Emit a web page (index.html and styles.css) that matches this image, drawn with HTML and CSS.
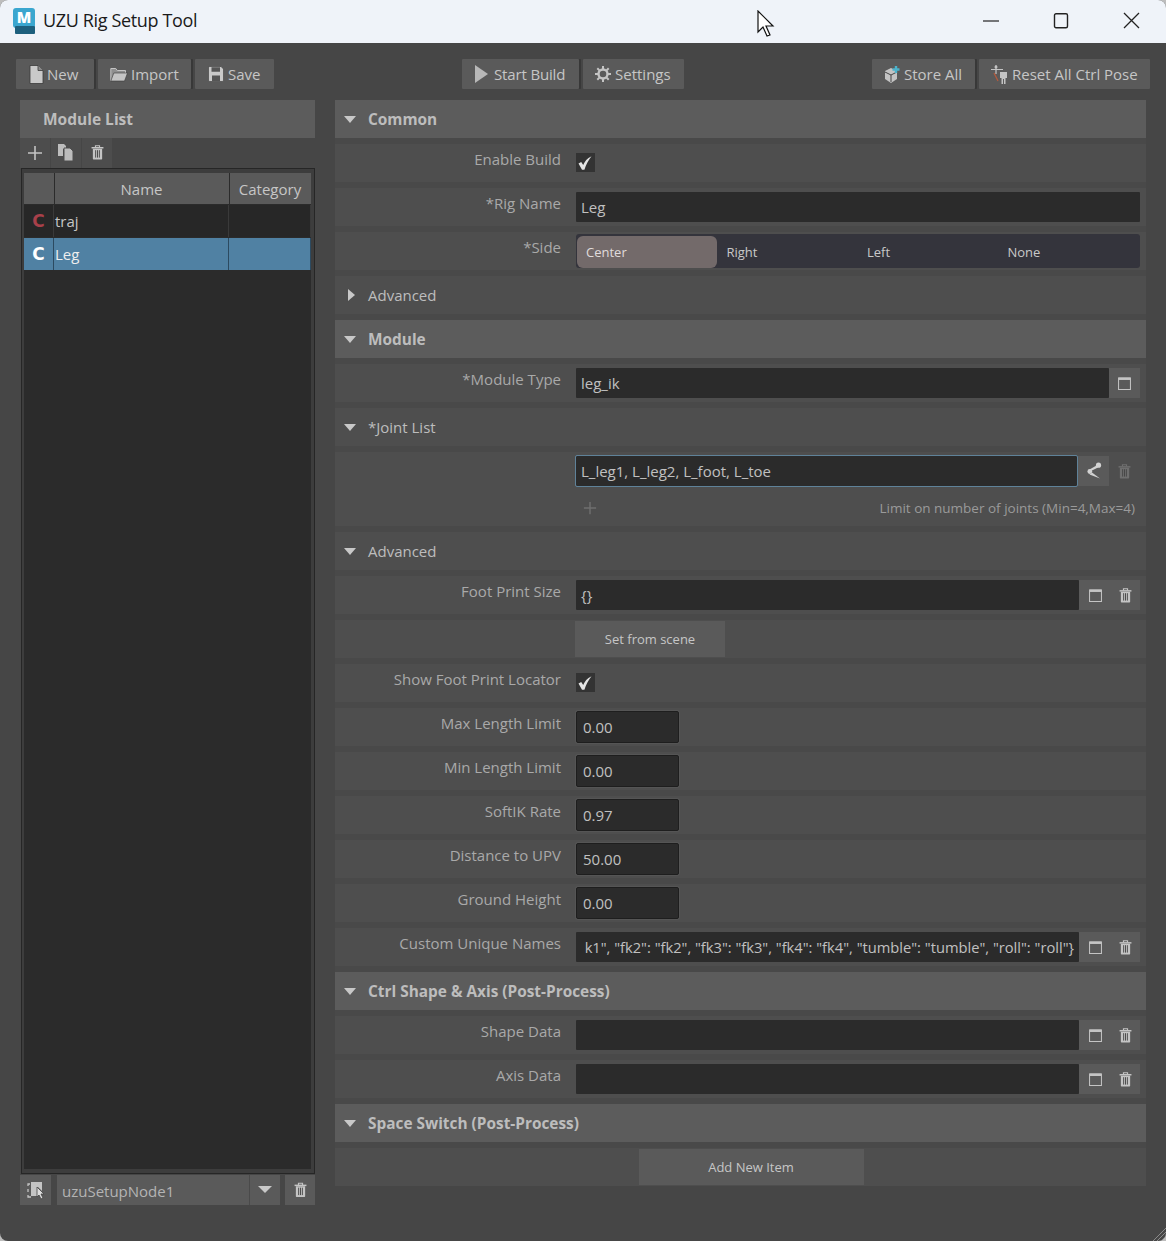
FILE: index.html
```html
<!DOCTYPE html>
<html lang="en">
<head>
<meta charset="utf-8">
<title>UZU Rig Setup Tool</title>
<link rel="stylesheet" href="styles.css">
</head>
<body>
<svg class="sprite" width="0" height="0">
  <symbol id="i-trash" viewBox="0 0 14 16"><path d="M4.800 2.500V.8h4.400v1.700" fill="none" stroke="currentColor" stroke-width="1.200"/><path d="M.6 2.200h12.800v1.600H.6z" fill="currentColor"/><path d="M2 4h10v10.800c0 .4-.3.7-.7.7H2.700c-.4 0-.7-.3-.7-.7z" fill="currentColor"/><path d="M5 5.500v8M7 5.500v8M9 5.500v8" stroke="#444" stroke-width="1"/></symbol>
  <symbol id="i-win" viewBox="0 0 14 14"><path d="M.6 1h12.800v12.400H.6z" fill="none" stroke="currentColor" stroke-width="1.100"/><path d="M.6 .6h12.800v2.600H.6z" fill="currentColor"/></symbol>
  <symbol id="i-plus" viewBox="0 0 16 16"><path d="M8 1v14M1 8h14" fill="none" stroke="currentColor" stroke-width="1.600"/></symbol>
  <symbol id="i-check" viewBox="0 0 16 16"><path d="M1.500 8.500 4.200 7l2 3C7.800 6.400 10 3.400 14.500 1.200 11.500 5 9 9.500 7.400 14.800H5z" fill="currentColor"/></symbol>
</svg>
<div class="window">
  <header class="titlebar">
    <svg class="logo" width="24" height="26" viewBox="0 0 24 26"><rect x="1" y="0" width="22" height="20" rx="3" fill="#3aa6cf"/><rect x="3" y="18" width="20" height="8" rx="1" fill="#1d5f7d"/><text x="12" y="15" class="logo-m">M</text></svg>
    <span class="title">UZU Rig Setup Tool</span>
    <div class="winctrls">
      <svg width="16" height="16" viewBox="0 0 16 16"><path d="M0 8h16" stroke="#222" stroke-width="1.200"/></svg>
      <svg width="16" height="16" viewBox="0 0 16 16"><rect x="1.500" y=".8" width="13" height="14" rx="1.500" fill="none" stroke="#222" stroke-width="1.400"/></svg>
      <svg width="17" height="17" viewBox="0 0 17 17"><path d="M1 1l15 15M16 1 1 16" stroke="#222" stroke-width="1.300"/></svg>
    </div>
  </header>

  <main class="content">
    <nav class="toolbar">
      <div class="btngroup">
        <button class="tbtn w-new"><svg width="15" height="19" viewBox="0 0 15 19"><path d="M1 .5h8l5 5v13H1z" fill="#c9c9c9" stroke="#3a3a3a" stroke-width=".8"/><path d="M9 .5v5h5" fill="#8a8a8a" stroke="#3a3a3a" stroke-width=".8"/></svg>New</button>
        <button class="tbtn w-import"><svg width="18" height="15" viewBox="0 0 18 15"><path d="M.8 14V1.500h5l1.500 2H15.500v2.500" fill="#8f8f8f" stroke="#c4c4c4" stroke-width="1"/><path d="M.8 14 3.800 6h13.700l-3 8z" fill="#c4c4c4" stroke="#3a3a3a" stroke-width=".6"/></svg>Import</button>
        <button class="tbtn w-save"><svg width="16" height="16" viewBox="0 0 16 16"><path d="M.5 2C.5 1 1 .5 2 .5h11l2.500 2.500v11c0 1-.5 1.500-1.500 1.500H2c-1 0-1.500-.5-1.500-1.500z" fill="#c9c9c9" stroke="#3a3a3a" stroke-width=".6"/><path d="M3.500 1.300h8.500v4.500H3.500zM4 9.500h8v5.500H4z" fill="#555"/></svg>Save</button>
      </div>
      <div class="btngroup">
        <button class="tbtn w-build"><svg width="13" height="18" viewBox="0 0 13 18"><path d="M0 0l13 9-13 9z" fill="#b8b8b8"/></svg>Start Build</button>
        <button class="tbtn w-settings"><svg width="16" height="17" viewBox="0 0 16 17"><circle cx="8" cy="8" r="4.500" fill="none" stroke="#c4c4c4" stroke-width="2.400"/><path d="M8 0v3M8 13v3M0 8h3M13 8h3M2.300 2.300l2.100 2.100M11.600 11.600l2.100 2.100M13.700 2.300l-2.100 2.100M4.400 11.600l-2.100 2.100" stroke="#c4c4c4" stroke-width="2"/></svg>Settings</button>
      </div>
      <div class="btngroup">
        <button class="tbtn w-store"><svg width="16" height="18" viewBox="0 0 16 18"><path d="M0 6l6-3 6 3v8l-6 4-6-4z" fill="#c4c4c4"/><path d="M0 7l6 3v7M6 10l6-3" fill="none" stroke="#444"/><path d="M11 1v7M7.500 4.500h7" stroke="#4cb3cc" stroke-width="2.400"/></svg>Store All</button>
        <button class="tbtn w-reset"><svg width="18" height="20" viewBox="0 0 18 20"><circle cx="6" cy="3" r="1.500" fill="#c4c4c4"/><path d="M1 5.500h12M6 1v9" stroke="#c4c4c4" stroke-width="1.200"/><path d="M10 8h7v6h-1.500v6h-1.500v-5h-1v5h-1.500v-6H10z" fill="#c4c4c4"/><path d="M4 9l4 8" stroke="#b65a3c" stroke-width="1.200"/></svg>Reset All Ctrl Pose</button>
      </div>
    </nav>

    <div class="columns">
      <aside class="left">
        <div class="left-head">Module List</div>
        <div class="left-tools">
          <button class="ltool"><svg width="16" height="16" class="ic"><use href="#i-plus"/></svg></button>
          <button class="ltool"><svg width="16" height="17" viewBox="0 0 16 17"><path d="M0 0h6l2 2v3H5v7H0z" fill="#bdbdbd"/><path d="M6 4h6l3 3v10H6z" fill="#bdbdbd" stroke="#4e4e4e"/></svg></button>
          <button class="ltool"><svg width="13" height="15" class="ic"><use href="#i-trash"/></svg></button>
        </div>
        <div class="table-frame">
          <div class="table">
            <div class="thead"><span></span><span>Name</span><span>Category</span></div>
            <div class="trow"><span class="badge red">C</span><span class="tname">traj</span><span></span></div>
            <div class="trow selected"><span class="badge">C</span><span class="tname">Leg</span><span></span></div>
          </div>
        </div>
        <div class="nodebar">
          <button class="nbtn"><svg width="18" height="19" viewBox="0 0 18 19"><path d="M1 5V3h2M1 8v3M1 14v2h3" fill="none" stroke="#c4c4c4" stroke-width="1.300"/><path d="M4 1h11v9l-4-4v9H4z" fill="#c4c4c4"/><path d="M10 6l7 7h-3l2 4-2 1-2-4-2 2z" fill="#ddd" stroke="#444" stroke-width=".8"/></svg></button>
          <div class="combo"><span class="combo-text">uzuSetupNode1</span><span class="combo-arrow"></span></div>
          <button class="nbtn nbtn-trash"><svg width="13" height="16" class="ic"><use href="#i-trash"/></svg></button>
        </div>
      </aside>

      <section class="form">
        <div class="head main"><span class="tri"></span>Common</div>
        <div class="row"><span class="label">Enable Build</span><div class="field"><span class="check"><svg width="16" height="16" class="chk"><use href="#i-check"/></svg></span></div></div>
        <div class="row"><span class="label">*Rig Name</span><div class="field"><div class="input">Leg</div></div></div>
        <div class="row"><span class="label">*Side</span><div class="field"><div class="segment"><span class="seg on">Center</span><span class="seg">Right</span><span class="seg">Left</span><span class="seg">None</span></div></div></div>
        <div class="head sub"><span class="tri closed"></span>Advanced</div>

        <div class="head main"><span class="tri"></span>Module</div>
        <div class="row"><span class="label">*Module Type</span><div class="field"><div class="input">leg_ik</div><button class="ibtn one"><svg width="13" height="13" class="ic"><use href="#i-win"/></svg></button></div></div>
        <div class="head sub"><span class="tri"></span>*Joint List</div>
        <div class="row joint">
          <span class="label"></span>
          <div class="joint-body">
            <div class="field">
              <div class="input focus">L_leg1, L_leg2, L_foot, L_toe</div>
              <button class="ibtn one"><svg width="16" height="18" viewBox="0 0 16 18"><circle cx="12.500" cy="3.200" r="2.600" fill="#d2d2d2"/><path d="M10.500 3.500 12 5.500 5 9 3.500 7.500z" fill="#d2d2d2"/><circle cx="3.800" cy="9.500" r="2.400" fill="#d2d2d2"/><path d="M6 10.500 14 16.500 3.500 12.500z" fill="#d2d2d2"/></svg></button>
              <button class="ibtn flat"><svg width="13" height="15" class="ic dim"><use href="#i-trash"/></svg></button>
            </div>
            <div class="joint-foot"><svg width="14" height="14" class="ic dim"><use href="#i-plus"/></svg><span class="limit">Limit on number of joints (Min=4,Max=4)</span></div>
          </div>
        </div>
        <div class="head sub"><span class="tri"></span>Advanced</div>
        <div class="row"><span class="label">Foot Print Size</span><div class="field"><div class="input">{}</div><div class="ibtns"><svg width="13" height="13" class="ic"><use href="#i-win"/></svg><svg width="13" height="15" class="ic"><use href="#i-trash"/></svg></div></div></div>
        <div class="row"><span class="label"></span><div class="field"><button class="wide">Set from scene</button></div></div>
        <div class="row"><span class="label">Show Foot Print Locator</span><div class="field"><span class="check"><svg width="16" height="16" class="chk"><use href="#i-check"/></svg></span></div></div>
        <div class="row"><span class="label">Max Length Limit</span><div class="field"><div class="num">0.00</div></div></div>
        <div class="row"><span class="label">Min Length Limit</span><div class="field"><div class="num">0.00</div></div></div>
        <div class="row"><span class="label">SoftIK Rate</span><div class="field"><div class="num">0.97</div></div></div>
        <div class="row"><span class="label">Distance to UPV</span><div class="field"><div class="num">50.00</div></div></div>
        <div class="row"><span class="label">Ground Height</span><div class="field"><div class="num">0.00</div></div></div>
        <div class="row"><span class="label">Custom Unique Names</span><div class="field"><div class="input clip">k1", "fk2": "fk2", "fk3": "fk3", "fk4": "fk4", "tumble": "tumble", "roll": "roll"}</div><div class="ibtns"><svg width="13" height="13" class="ic"><use href="#i-win"/></svg><svg width="13" height="15" class="ic"><use href="#i-trash"/></svg></div></div></div>

        <div class="head main"><span class="tri"></span>Ctrl Shape &amp; Axis (Post-Process)</div>
        <div class="row"><span class="label">Shape Data</span><div class="field"><div class="input"></div><div class="ibtns"><svg width="13" height="13" class="ic"><use href="#i-win"/></svg><svg width="13" height="15" class="ic"><use href="#i-trash"/></svg></div></div></div>
        <div class="row"><span class="label">Axis Data</span><div class="field"><div class="input"></div><div class="ibtns"><svg width="13" height="13" class="ic"><use href="#i-win"/></svg><svg width="13" height="15" class="ic"><use href="#i-trash"/></svg></div></div></div>

        <div class="head main"><span class="tri"></span>Space Switch (Post-Process)</div>
        <div class="row add"><button class="addbtn">Add New Item</button></div>
      </section>
    </div>
  </main>
  <svg class="grip" width="14" height="14" viewBox="0 0 14 14"><path d="M1 14 14 1M5 14l9-9M9 14l5-5" stroke="#8a8a8a" stroke-width="1"/></svg>
  <svg class="cursor" width="20" height="28" viewBox="0 0 20 28"><path d="M1 1v21l5-5 4 9 3-1-4-9h7z" fill="#fff" stroke="#111" stroke-width="1.200"/></svg>
</div>
</body>
</html>
```

FILE: styles.css
```css
* { box-sizing: border-box; }
html, body { margin: 0; padding: 0; }
body {
  width: 1166px;
  height: 1241px;
  background: #bdbdbd;
  font-family: "Open Sans", "Noto Sans", sans-serif;
  font-size: 15px;
  color: #bdbdbd;
  overflow: hidden;
}
button { font: inherit; color: inherit; border: 0; padding: 0; margin: 0; }
.sprite { position: absolute; }

.window {
  position: relative;
  width: 1166px;
  height: 1241px;
  background: #464646;
  border-radius: 8px;
  overflow: hidden;
}
.titlebar {
  height: 43px;
  background: #eff3f9;
  display: flex;
  align-items: center;
  padding-left: 12px;
  color: #1a1a1a;
}
.logo { margin-right: 7px; margin-top: -1px; }
.logo-m { font: 800 15px "Open Sans", sans-serif; fill: #fff; text-anchor: middle; }
.title { font-size: 18px; letter-spacing: -.35px; margin-top: -3px; }
.winctrls {
  margin-left: auto;
  display: flex;
  align-items: center;
  gap: 54px;
  padding-right: 26px;
  margin-top: -2px;
}

.content { padding: 16px 16px 0 16px; }
.toolbar {
  display: flex;
  justify-content: space-between;
  height: 30px;
}
.btngroup { display: flex; gap: 4px; }
.tbtn {
  height: 30px;
  background: #5a5a5a;
  display: flex;
  align-items: center;
  gap: 4px;
  padding-left: 13px;
  white-space: nowrap;
  color: #c6c6c6;
  border-radius: 1px;
  box-shadow: 2px 0 0 #383838;
}
.btngroup .tbtn:last-child { box-shadow: none; }
.w-new { width: 78px; gap: 3px; }
.w-import { width: 93px; padding-left: 12px; gap: 3px; }
.w-save { width: 79px; gap: 4px; }
.w-build { width: 117px; gap: 6px; letter-spacing: -.15px; }
.w-settings { width: 101px; padding-left: 12px; gap: 4px; }
.w-store { width: 103px; gap: 3px; }
.w-reset { width: 171px; padding-left: 11px; }

.columns {
  display: grid;
  grid-template-columns: 295px 811px;
  gap: 20px;
  margin-top: 11px;
  padding-left: 4px;
}

/* Left column */
.left { display: flex; flex-direction: column; height: 1105px; }
.left-head {
  height: 38px;
  background: #5c5c5c;
  padding-left: 23px;
  display: flex;
  align-items: center;
  font-weight: 700;
  font-size: 15.500px;
  color: #bdbdbd;
}
.left-tools { display: flex; gap: 1px; height: 30px; }
.ltool {
  width: 30px;
  background: #4d4d4d;
  display: flex;
  align-items: center;
  justify-content: center;
}
.ic { color: #c4c4c4; display: block; }
.ic.dim { color: #6f6f6f; }
.table-frame {
  margin-left: 1px;
  height: 1007px;
  padding: 4px 3px 4px 2px;
  background: #3d3d3d;
  border: 1px solid #262626;
}
.table { height: 100%; background: #2b2b2b; }
.thead, .trow {
  display: grid;
  gap: 1px;
}
.thead {
  grid-template-columns: 30px 174px 1fr;
  height: 31px;
  background: #2b2b2b;
  align-items: stretch;
  margin-bottom: 1px;
}
.thead span {
  background: #5a5a5a;
  display: flex;
  align-items: center;
  justify-content: center;
  color: #c6c6c6;
  padding-right: 1px;
  padding-top: 1px;
}
.trow {
  grid-template-columns: 29px 174px 81px;
  height: 32px;
  background: #3a3a3a;
  margin-bottom: 1px;
  align-items: stretch;
}
.trow span {
  background: #272727;
  display: flex;
  align-items: center;
  padding-top: 1px;
}
.trow.selected { background: #2c4a60; }
.trow.selected span { background: #5081a3; }
.trow .tname { color: #c6c6c6; padding-left: 1px; }
.trow.selected .tname { color: #eee; }
.trow .badge {
  justify-content: center;
  font-family: "DejaVu Sans", sans-serif;
  font-weight: 700;
  font-size: 17px;
  color: #fff;
  padding-top: 1px;
}
.trow .badge.red { color: #a8404a; }

.nodebar {
  display: flex;
  margin-top: 1px;
  height: 30px;
}
.nbtn {
  width: 31px;
  background: #5a5a5a;
  display: flex;
  align-items: center;
  justify-content: center;
}
.nbtn-trash { width: 30px; margin-left: 5px; }
.combo {
  margin-left: 6px;
  width: 223px;
  display: flex;
  gap: 1px;
  background: #4a4a4a;
}
.combo-text {
  flex: 1;
  background: #5a5a5a;
  padding: 2px 0 0 5px;
  display: flex;
  align-items: center;
  color: #b4b4b4;
}
.combo-arrow {
  width: 30px;
  background: #5a5a5a;
  position: relative;
}
.combo-arrow::after {
  content: "";
  position: absolute;
  left: 8px;
  top: 11px;
  border-left: 7px solid transparent;
  border-right: 7px solid transparent;
  border-top: 7px solid #c8c8c8;
}

/* Form column */
.form { display: flex; flex-direction: column; gap: 6px; background: #494949; align-self: start; }
.head {
  height: 38px;
  display: flex;
  align-items: center;
  padding-left: 33px;
  position: relative;
  color: #bdbdbd;
}
.head.main { background: #5c5c5c; font-weight: 700; font-size: 15.400px; }
.head.sub { background: #4e4e4e; }
.tri {
  position: absolute;
  left: 9px;
  top: 16px;
  border-left: 6.500px solid transparent;
  border-right: 6.500px solid transparent;
  border-top: 7px solid #c8c8c8;
}
.tri.closed {
  left: 13px;
  top: 13px;
  border-top: 6.500px solid transparent;
  border-bottom: 6.500px solid transparent;
  border-left: 7px solid #c8c8c8;
  border-right: 0;
}
.row {
  height: 38px;
  background: #4e4e4e;
  display: grid;
  grid-template-columns: 226px 1fr;
  column-gap: 15px;
  padding-right: 6px;
}
.label {
  text-align: right;
  line-height: 21px;
  padding-top: 5px;
  color: #a9a9a9;
  white-space: nowrap;
}
.field {
  display: flex;
  align-items: center;
  min-width: 0;
}
.input {
  flex: 1;
  min-width: 0;
  height: 30px;
  background: #2b2b2b;
  border-radius: 1px;
  padding: 1px 5px 0;
  line-height: 28px;
  color: #c0c0c0;
  white-space: nowrap;
}
.input.focus { outline: 1px solid #5f8299; outline-offset: 0; margin-right: 1px; }
.input.clip { text-align: right; overflow: hidden; font-size: 14.700px; }
.ibtn {
  width: 31px;
  height: 30px;
  background: #5a5a5a;
  display: flex;
  align-items: center;
  justify-content: center;
}
.ibtn.flat { background: transparent; }
.ibtns {
  width: 61px;
  height: 30px;
  background: #5a5a5a;
  display: flex;
  align-items: center;
  justify-content: space-between;
  padding: 0 8px 0 10px;
}
.check {
  width: 19px;
  height: 19px;
  background: #333;
  margin-top: -1px;
  padding-right: 2px;
  display: flex;
  align-items: center;
  justify-content: center;
}
.chk { color: #e4e4e4; }
.segment {
  flex: 1;
  min-width: 0;
  height: 34px;
  background: #34343c;
  border-radius: 3px;
  padding: 2px 1px;
  display: grid;
  grid-template-columns: repeat(4, 1fr);
  font-size: 13px;
}
.seg {
  padding-left: 9px;
  line-height: 32px;
  color: #c8c8c8;
}
.seg.on {
  background: #736a6a;
  border-radius: 6px;
  width: 140px;
  color: #e0dcdc;
}
.joint { height: 74px; }
.joint-body { padding-top: 4px; min-width: 0; }
.joint-foot {
  display: flex;
  align-items: center;
  justify-content: space-between;
  height: 44px;
  padding: 0 5px 0 7px;
  color: #9a9a9a;
}
.limit { font-size: 13.500px; }
.wide {
  width: 150px;
  height: 36px;
  background: #5a5a5a;
  font-size: 13px;
  color: #c6c6c6;
  margin-left: -1px;
}
.num {
  width: 103px;
  height: 32px;
  background: #2b2b2b;
  border: 1px solid #1e1e1e;
  border-radius: 2px;
  box-shadow: 0 0 0 1px #555;
  padding: 2px 6px 0;
  line-height: 26px;
  color: #c0c0c0;
}
.add { display: flex; justify-content: center; padding-left: 27px; align-items: center; }
.addbtn {
  width: 225px;
  height: 36px;
  background: #5a5a5a;
  font-size: 13px;
  color: #c6c6c6;
}

.grip { position: absolute; right: 0; bottom: 0; }
.cursor { position: absolute; left: 757px; top: 10px; }
```
